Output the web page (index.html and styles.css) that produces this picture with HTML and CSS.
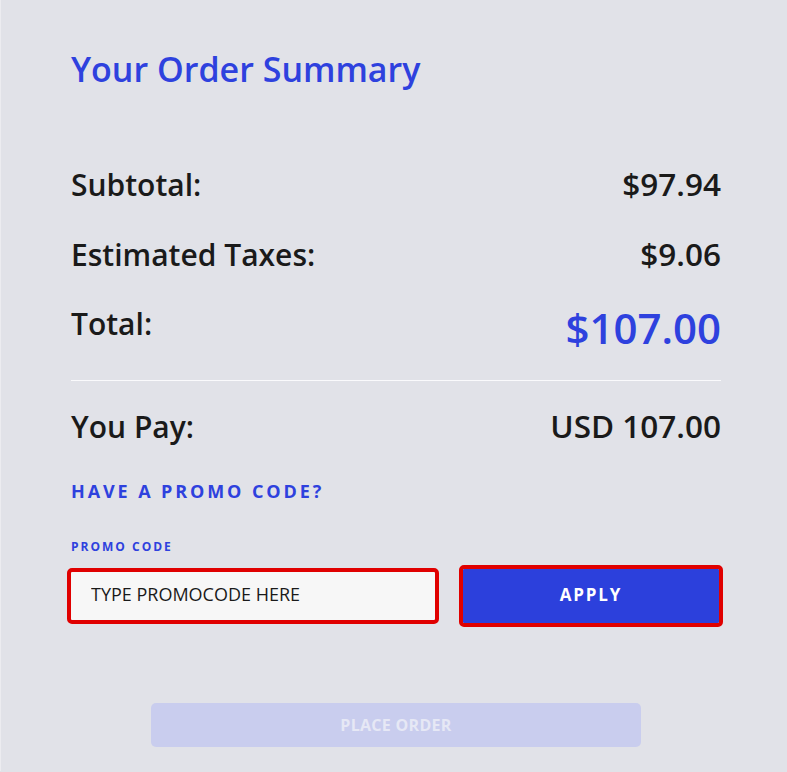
FILE: index.html
```html
<!DOCTYPE html>
<html lang="en">
<head>
  <meta charset="UTF-8">
  <title>Order Summary</title>
  <link rel="stylesheet" href="styles.css">
</head>
<body>
  <div class="resumen">
    <h1>Your Order Summary</h1>

    <div class="fila">
      <span>Subtotal:</span>
      <span class="valor">$97.94</span>
    </div>
    <div class="fila">
      <span>Estimated Taxes:</span>
      <span class="valor">$9.06</span>
    </div>
    <div class="fila total">
      <span>Total:</span>
      <span class="monto">$107.00</span>
    </div>

    <hr>

    <div class="fila pagas">
      <span>You Pay:</span>
      <span class="valor">USD 107.00</span>
    </div>

    <a class="promo-link" href="#">HAVE A PROMO CODE?</a>

    <label class="promo-label" for="promo">PROMO CODE</label>
    <div class="promo-form">
      <input type="text" id="promo" placeholder="TYPE PROMOCODE HERE">
      <button type="button" class="aplicar">APPLY</button>
    </div>

    <div class="acciones">
      <button type="button" class="ordenar" disabled>PLACE ORDER</button>
    </div>
  </div>
</body>
</html>
```

FILE: styles.css
```css
body {
  margin: 0;
  background: #e1e2e8;
  font-family: "Open Sans", Arial, sans-serif;
  color: #1a1a1a;
  border-left: 1px solid #ececf0;
}
.resumen {
  padding: 49px 66px 24px 70px;
}
h1 {
  margin: 0 0 75px;
  font-size: 34px;
  line-height: 40px;
  font-weight: 600;
  color: #2e41de;
}
.fila {
  display: flex;
  justify-content: space-between;
  align-items: baseline;
  font-size: 30px;
  line-height: 40px;
  font-weight: 600;
  height: 70px;
}
.valor {
  font-size: 31.5px;
}
.total {
  align-items: flex-start;
}
.monto {
  font-size: 42px;
  color: #2e41de;
  margin-top: 4px;
}
hr {
  border: none;
  border-top: 1px solid #fafafc;
  margin: 6px 0 25px;
}
.pagas {
  height: 40px;
}
.promo-link {
  display: block;
  margin-top: 33px;
  color: #2e41de;
  font-size: 18px;
  line-height: 24px;
  font-weight: 700;
  letter-spacing: 2.9px;
  text-decoration: none;
}
.promo-label {
  display: block;
  margin-top: 36px;
  color: #2e41de;
  font-size: 12px;
  line-height: 16px;
  font-weight: 700;
  letter-spacing: 2px;
}
.promo-form {
  display: flex;
  align-items: center;
  gap: 28px;
  margin-top: 14px;
}
input {
  width: 364px;
  height: 48px;
  box-sizing: border-box;
  padding: 0 20px 4px;
  border: none;
  background: #f7f7f7;
  font-family: inherit;
  font-size: 18px;
  outline: 4px solid #e00000;
  border-radius: 1px;
}
input::placeholder {
  color: #1a1a1a;
}
.aplicar {
  width: 256px;
  height: 54px;
  padding-bottom: 5px;
  border: none;
  background: #2c40dc;
  color: white;
  font-family: inherit;
  font-size: 17px;
  font-weight: 700;
  letter-spacing: 1.8px;
  outline: 4px solid #e00000;
  border-radius: 1px;
}
.acciones {
  display: flex;
  justify-content: center;
  margin-top: 80px;
}
.ordenar {
  width: 490px;
  height: 44px;
  border: none;
  border-radius: 5px;
  background: #c9cdee;
  color: #e6e8f5;
  font-family: inherit;
  font-size: 16px;
  font-weight: 700;
  letter-spacing: 0.3px;
}
```
